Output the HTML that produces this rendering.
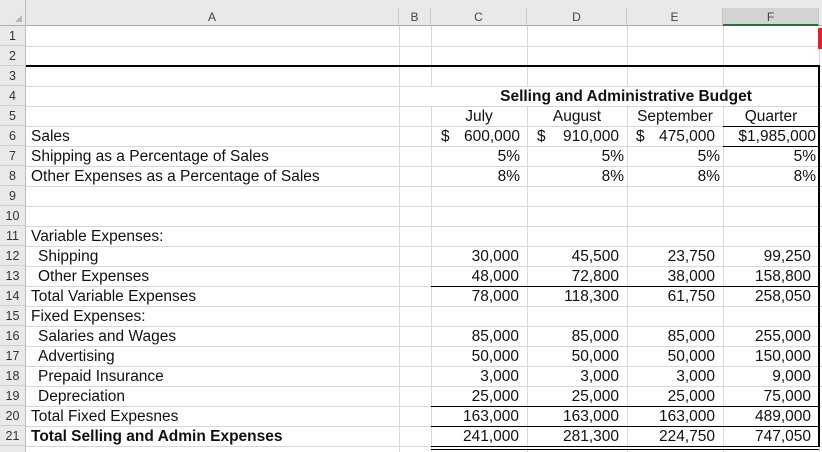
<!DOCTYPE html>
<html><head><meta charset="utf-8"><style>
*{margin:0;padding:0;box-sizing:border-box}
html,body{width:822px;height:452px;overflow:hidden}
body{background:#fff;font-family:"Liberation Sans",Arial,sans-serif;font-size:15.5px;color:#111;position:relative}
.a{position:absolute}
.h{position:absolute;top:0;height:26px;background:#e9e9e9;border-bottom:1px solid #ababab}
.ch{position:absolute;top:8px;height:18px;line-height:18px;text-align:center;font-size:12px;color:#444;border-right:1px solid #c8c8c8}
.rn{position:absolute;left:0;width:25px;height:20px;line-height:21px;text-align:center;font-size:12.5px;color:#333;background:#e9e9e9;border-bottom:1px solid #d0d0d0}
.v{position:absolute;width:1px;background:#d8d8d8}
.g{position:absolute;height:1px;background:#d8d8d8;left:26px;width:796px}
.t{position:absolute;height:20px;line-height:21px;white-space:nowrap}
.r{text-align:right}
.c{text-align:center}
.b{font-weight:bold}
.k{position:absolute;background:#000}
</style></head><body>
<div class="h" style="left:0;width:822px"></div>
<div class="a" style="left:0;top:0;width:26px;height:26px;border-right:1px solid #bdbdbd"></div>
<div class="a" style="left:15px;top:15px;width:0;height:0;border-left:7px solid transparent;border-bottom:7px solid #b8b8b8"></div>
<div class="ch" style="left:26px;width:373px">A</div>
<div class="ch" style="left:399px;width:32px">B</div>
<div class="ch" style="left:431px;width:96px">C</div>
<div class="ch" style="left:527px;width:100px">D</div>
<div class="ch" style="left:627px;width:96px">E</div>
<div class="ch" style="left:723px;width:96px;background:#d3d3d3;border-bottom:2px solid #217346">F</div>

<div class="g" style="top:46px"></div><div class="g" style="top:66px"></div><div class="g" style="top:86px"></div><div class="g" style="top:106px"></div><div class="g" style="top:126px"></div><div class="g" style="top:146px"></div><div class="g" style="top:166px"></div><div class="g" style="top:186px"></div><div class="g" style="top:206px"></div><div class="g" style="top:226px"></div><div class="g" style="top:246px"></div><div class="g" style="top:266px"></div><div class="g" style="top:286px"></div><div class="g" style="top:306px"></div><div class="g" style="top:326px"></div><div class="g" style="top:346px"></div><div class="g" style="top:366px"></div><div class="g" style="top:386px"></div><div class="g" style="top:406px"></div><div class="g" style="top:426px"></div><div class="g" style="top:446px"></div>
<div class="v" style="left:399px;top:26px;height:426px"></div>
<div class="v" style="left:431px;top:26px;height:426px"></div>
<div class="v" style="left:527px;top:26px;height:60px"></div><div class="v" style="left:527px;top:106px;height:346px"></div>
<div class="v" style="left:627px;top:26px;height:60px"></div><div class="v" style="left:627px;top:106px;height:346px"></div>
<div class="v" style="left:723px;top:26px;height:60px"></div><div class="v" style="left:723px;top:106px;height:346px"></div>
<div class="v" style="left:819px;top:26px;height:426px"></div>
<div class="a" style="left:431px;top:87px;width:388px;height:19px;background:#fff"></div>

<div class="rn" style="top:26px">1</div><div class="rn" style="top:46px">2</div><div class="rn" style="top:66px">3</div><div class="rn" style="top:86px">4</div><div class="rn" style="top:106px">5</div><div class="rn" style="top:126px">6</div><div class="rn" style="top:146px">7</div><div class="rn" style="top:166px">8</div><div class="rn" style="top:186px">9</div><div class="rn" style="top:206px">10</div><div class="rn" style="top:226px">11</div><div class="rn" style="top:246px">12</div><div class="rn" style="top:266px">13</div><div class="rn" style="top:286px">14</div><div class="rn" style="top:306px">15</div><div class="rn" style="top:326px">16</div><div class="rn" style="top:346px">17</div><div class="rn" style="top:366px">18</div><div class="rn" style="top:386px">19</div><div class="rn" style="top:406px">20</div><div class="rn" style="top:426px">21</div><div class="rn" style="top:446px"></div>
<div class="a" style="left:25px;top:26px;width:1px;height:426px;background:#bdbdbd"></div>

<div class="k" style="left:26px;top:65px;width:794px;height:2px"></div>
<div class="k" style="left:818px;top:66px;width:2px;height:381px"></div>
<div class="k" style="left:723px;top:126px;width:96px;height:1px"></div>
<div class="k" style="left:723px;top:146px;width:96px;height:1px"></div>
<div class="k" style="left:431px;top:286px;width:388px;height:1px"></div>
<div class="k" style="left:431px;top:406px;width:388px;height:1px"></div>
<div class="k" style="left:431px;top:426px;width:388px;height:1px"></div>
<div class="k" style="left:431px;top:446px;width:388px;height:1px"></div>
<div class="k" style="left:431px;top:449px;width:388px;height:1px"></div>
<div class="a" style="left:818px;top:28px;width:4px;height:21px;background:#e0202a"></div>

<div class="t" style="left:31px;top:126px">Sales</div>
<div class="t" style="left:31px;top:146px">Shipping as a Percentage of Sales</div>
<div class="t" style="left:31px;top:166px">Other Expenses as a Percentage of Sales</div>
<div class="t" style="left:31px;top:226px">Variable Expenses:</div>
<div class="t" style="left:38px;top:246px">Shipping</div>
<div class="t" style="left:38px;top:266px">Other Expenses</div>
<div class="t" style="left:31px;top:286px">Total Variable Expenses</div>
<div class="t" style="left:31px;top:306px">Fixed Expenses:</div>
<div class="t" style="left:38px;top:326px">Salaries and Wages</div>
<div class="t" style="left:38px;top:346px">Advertising</div>
<div class="t" style="left:38px;top:366px">Prepaid Insurance</div>
<div class="t" style="left:38px;top:386px">Depreciation</div>
<div class="t" style="left:31px;top:406px">Total Fixed Expesnes</div>
<div class="t b" style="left:31px;top:426px">Total Selling and Admin Expenses</div>

<div class="t b c" style="left:431px;width:390px;top:86px">Selling and Administrative Budget</div>
<div class="t c" style="left:431px;width:96px;top:106px">July</div>
<div class="t c" style="left:527px;width:100px;top:106px">August</div>
<div class="t c" style="left:627px;width:96px;top:106px">September</div>
<div class="t c" style="left:723px;width:96px;top:106px">Quarter</div>

<div class="t" style="left:441px;top:126px">$</div><div class="t r" style="left:431px;width:89px;top:126px">600,000</div>
<div class="t" style="left:537px;top:126px">$</div><div class="t r" style="left:527px;width:92px;top:126px">910,000</div>
<div class="t" style="left:636px;top:126px">$</div><div class="t r" style="left:627px;width:88px;top:126px">475,000</div>
<div class="t r" style="left:723px;width:93px;top:126px">$1,985,000</div>

<div class="t r" style="left:431px;width:89px;top:146px">5%</div><div class="t r" style="left:527px;width:97px;top:146px">5%</div><div class="t r" style="left:627px;width:93px;top:146px">5%</div><div class="t r" style="left:723px;width:93px;top:146px">5%</div>
<div class="t r" style="left:431px;width:89px;top:166px">8%</div><div class="t r" style="left:527px;width:97px;top:166px">8%</div><div class="t r" style="left:627px;width:93px;top:166px">8%</div><div class="t r" style="left:723px;width:93px;top:166px">8%</div>

<div class="t r" style="left:431px;width:88px;top:246px">30,000</div><div class="t r" style="left:527px;width:92px;top:246px">45,500</div><div class="t r" style="left:627px;width:88px;top:246px">23,750</div><div class="t r" style="left:723px;width:88px;top:246px">99,250</div>
<div class="t r" style="left:431px;width:88px;top:266px">48,000</div><div class="t r" style="left:527px;width:92px;top:266px">72,800</div><div class="t r" style="left:627px;width:88px;top:266px">38,000</div><div class="t r" style="left:723px;width:88px;top:266px">158,800</div>
<div class="t r" style="left:431px;width:88px;top:286px">78,000</div><div class="t r" style="left:527px;width:92px;top:286px">118,300</div><div class="t r" style="left:627px;width:88px;top:286px">61,750</div><div class="t r" style="left:723px;width:88px;top:286px">258,050</div>
<div class="t r" style="left:431px;width:88px;top:326px">85,000</div><div class="t r" style="left:527px;width:92px;top:326px">85,000</div><div class="t r" style="left:627px;width:88px;top:326px">85,000</div><div class="t r" style="left:723px;width:88px;top:326px">255,000</div>
<div class="t r" style="left:431px;width:88px;top:346px">50,000</div><div class="t r" style="left:527px;width:92px;top:346px">50,000</div><div class="t r" style="left:627px;width:88px;top:346px">50,000</div><div class="t r" style="left:723px;width:88px;top:346px">150,000</div>
<div class="t r" style="left:431px;width:88px;top:366px">3,000</div><div class="t r" style="left:527px;width:92px;top:366px">3,000</div><div class="t r" style="left:627px;width:88px;top:366px">3,000</div><div class="t r" style="left:723px;width:88px;top:366px">9,000</div>
<div class="t r" style="left:431px;width:88px;top:386px">25,000</div><div class="t r" style="left:527px;width:92px;top:386px">25,000</div><div class="t r" style="left:627px;width:88px;top:386px">25,000</div><div class="t r" style="left:723px;width:88px;top:386px">75,000</div>
<div class="t r" style="left:431px;width:88px;top:406px">163,000</div><div class="t r" style="left:527px;width:92px;top:406px">163,000</div><div class="t r" style="left:627px;width:88px;top:406px">163,000</div><div class="t r" style="left:723px;width:88px;top:406px">489,000</div>
<div class="t r" style="left:431px;width:88px;top:426px">241,000</div><div class="t r" style="left:527px;width:92px;top:426px">281,300</div><div class="t r" style="left:627px;width:88px;top:426px">224,750</div><div class="t r" style="left:723px;width:88px;top:426px">747,050</div>
</body></html>
